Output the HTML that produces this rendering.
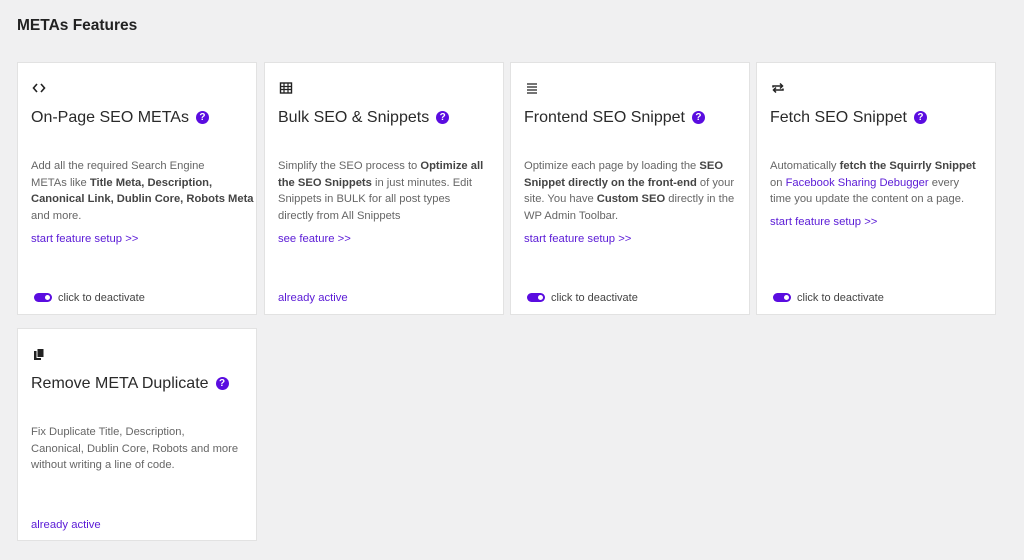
<!DOCTYPE html>
<html><head><style>
body{margin:0;background:#f0f0f1;font-family:"Liberation Sans",sans-serif;width:1024px;height:560px;position:relative;overflow:hidden;color:#333}
h1{position:absolute;left:17px;top:17px;margin:0;font-size:15.5px;font-weight:bold;color:#222}
.card{position:absolute;width:240px;background:#fff;border:1px solid #e2e2e2;box-sizing:border-box}
.ic{position:absolute;left:14px;top:18px;width:14px;height:14px}
.t{position:absolute;left:13px;top:46px;font-size:16px;color:#2a2a2a;white-space:nowrap}
.q{display:inline-block;width:13px;height:13px;border-radius:50%;background:#5a0ce0;color:#fff;font-size:10px;font-weight:bold;text-align:center;line-height:13px;vertical-align:2px;margin-left:7px}
.d{position:absolute;left:13px;top:95px;white-space:nowrap;font-size:11.2px;line-height:16.5px;color:#666}
.d b{color:#444}
a{color:#5a1ad6;text-decoration:none}
.l{position:absolute;left:13px;font-size:11.3px;color:#5a1ad6}
.tg{position:absolute;left:16px;font-size:11px;color:#444}
.tg i{display:inline-block;width:18px;height:9px;border-radius:5px;background:#5a0ce0;position:relative;vertical-align:-1px;margin-right:6px}
.tg i:after{content:"";position:absolute;right:2px;top:2px;width:5px;height:5px;border-radius:50%;background:#fff}
</style></head><body>
<h1>METAs Features</h1>

<div class="card" style="left:17px;top:62px;height:253px">
<svg class="ic" viewBox="0 0 14 14"><path d="M5 3L1.5 7 5 11M9 3l3.5 4L9 11" stroke="#222" stroke-width="1.6" fill="none"/></svg>
<div class="t">On-Page SEO METAs<span class="q">?</span></div>
<div class="d">Add all the required Search Engine<br>METAs like <b>Title Meta, Description,</b><br><b>Canonical Link, Dublin Core, Robots Meta</b><br>and more.</div>
<div class="l" style="top:170px">start feature setup &gt;&gt;</div>
<div class="tg" style="top:229px"><i></i>click to deactivate</div>
</div>

<div class="card" style="left:264px;top:62px;height:253px">
<svg class="ic" viewBox="0 0 14 14"><rect x="1.5" y="2" width="11" height="10" fill="none" stroke="#222" stroke-width="1.4"/><path d="M1.5 5.5h11M1.5 8.5h11M5 2v10M9 2v10" stroke="#222" stroke-width="1.2"/></svg>
<div class="t">Bulk SEO &amp; Snippets<span class="q">?</span></div>
<div class="d">Simplify the SEO process to <b>Optimize all</b><br><b>the SEO Snippets</b> in just minutes. Edit<br>Snippets in BULK for all post types<br>directly from All Snippets</div>
<div class="l" style="top:170px">see feature &gt;&gt;</div>
<div class="l" style="top:229px">already active</div>
</div>

<div class="card" style="left:510px;top:62px;height:253px">
<svg class="ic" viewBox="0 0 14 14"><path d="M2 3h10M2 6h10M2 9h10M2 12h10" stroke="#222" stroke-width="1.3"/></svg>
<div class="t">Frontend SEO Snippet<span class="q">?</span></div>
<div class="d">Optimize each page by loading the <b>SEO</b><br><b>Snippet directly on the front-end</b> of your<br>site. You have <b>Custom SEO</b> directly in the<br>WP Admin Toolbar.</div>
<div class="l" style="top:170px">start feature setup &gt;&gt;</div>
<div class="tg" style="top:229px"><i></i>click to deactivate</div>
</div>

<div class="card" style="left:756px;top:62px;height:253px">
<svg class="ic" viewBox="0 0 14 14"><path d="M2 6.5V5h9M9 2.5l2.5 2.5L9 7.5M12 7.5V9H3M5 11.5L2.5 9 5 6.5" stroke="#222" stroke-width="1.5" fill="none"/></svg>
<div class="t">Fetch SEO Snippet<span class="q">?</span></div>
<div class="d">Automatically <b>fetch the Squirrly Snippet</b><br>on <a>Facebook Sharing Debugger</a> every<br>time you update the content on a page.</div>
<div class="l" style="top:153px">start feature setup &gt;&gt;</div>
<div class="tg" style="top:229px"><i></i>click to deactivate</div>
</div>

<div class="card" style="left:17px;top:328px;height:213px">
<svg class="ic" viewBox="0 0 14 14"><rect x="2" y="4" width="7" height="9" fill="#222"/><rect x="5" y="1.5" width="7" height="9" fill="#222" stroke="#fff" stroke-width="1"/></svg>
<div class="t">Remove META Duplicate<span class="q">?</span></div>
<div class="d">Fix Duplicate Title, Description,<br>Canonical, Dublin Core, Robots and more<br>without writing a line of code.</div>
<div class="l" style="top:190px">already active</div>
</div>
</body></html>
